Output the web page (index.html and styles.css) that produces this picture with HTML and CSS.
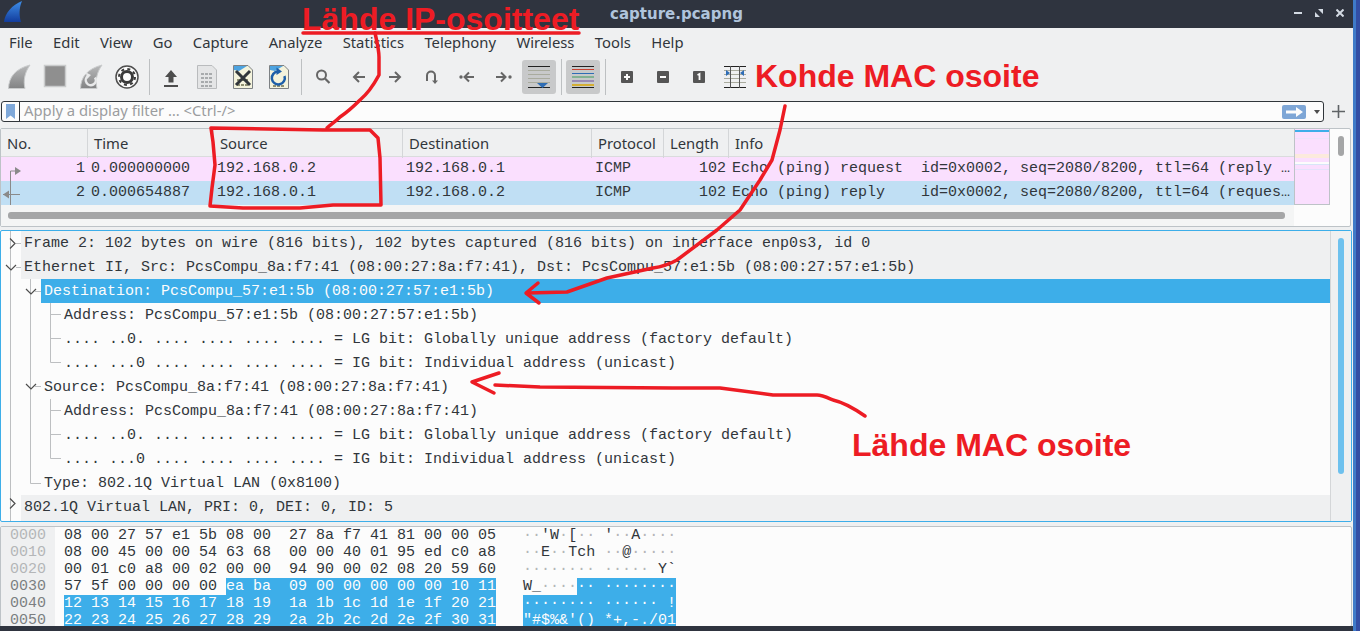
FILE: index.html
```html
<!DOCTYPE html>
<html lang="fi">
<head>
    <meta charset="UTF-8">
    <title>capture.pcapng</title>
    <link rel="stylesheet" href="styles.css">
</head>
<body>
<div class="window">
    <div class="titlebar">
        <svg class="app-logo" width="20" height="22" viewBox="0 0 20 22">
            <defs><linearGradient id="finBlue" x1="0" y1="0" x2="0" y2="1"><stop offset="0" stop-color="#3f8fe8"/><stop offset="1" stop-color="#123c9c"/></linearGradient></defs>
            <path d="M0 21C1 12 8 4 18 0C15 7 15 14 17 21Z" fill="url(#finBlue)"/>
        </svg>
        <div class="title">capture.pcapng</div>
        <div class="win-buttons">
            <svg width="8" height="8" viewBox="0 0 8 8"><rect y="3" width="8" height="2" fill="#d3dae3"/></svg>
            <svg width="8" height="8" viewBox="0 0 8 8"><path d="M0 8V3L5 8ZM8 0V5L3 0Z" fill="#d3dae3"/></svg>
            <svg width="8" height="8" viewBox="0 0 8 8"><path d="M0.5 0.5L7.5 7.5M7.5 0.5L0.5 7.5" stroke="#d3dae3" stroke-width="2"/></svg>
        </div>
    </div>

    <div class="menubar">
        <span>File</span><span>Edit</span><span>View</span><span>Go</span><span>Capture</span><span>Analyze</span><span>Statistics</span><span>Telephony</span><span>Wireless</span><span>Tools</span><span>Help</span>
    </div>

    <div class="toolbar">
        <svg width="0" height="0" class="defs"><defs><linearGradient id="finGrey" x1="0" y1="0" x2="0" y2="1"><stop offset="0" stop-color="#b8b9ba"/><stop offset="1" stop-color="#828384"/></linearGradient></defs></svg>
        <div class="tool"><svg viewBox="0 0 36 34"><path d="M7.500 28.500C8 17 14 9 29 5C24 12 22 20 24 28.500Z" fill="url(#finGrey)" stroke="#c9cbcc"/></svg></div>
        <div class="tool"><svg viewBox="0 0 36 34"><rect x="7.500" y="5.500" width="21" height="21" fill="#8f8f8f" stroke="#c9cbcc" stroke-width="1.500"/></svg></div>
        <div class="tool"><svg viewBox="0 0 36 34"><path d="M7.500 28.500C8 17 14 9 29 5C24 12 22 20 24 28.500Z" fill="url(#finGrey)" stroke="#c9cbcc"/><path d="M22 17.500A5 5 0 1 1 15 16" fill="none" stroke="#e8e9ea" stroke-width="2.500"/><path d="M13 12.500L18 15L14 19Z" fill="#e8e9ea"/></svg></div>
        <div class="tool"><svg viewBox="0 0 36 34"><circle cx="18" cy="17" r="11" fill="#fcfcfc" stroke="#4d4d4d" stroke-width="1.500"/><circle cx="18" cy="17" r="5.500" fill="none" stroke="#3a3a3a" stroke-width="3"/><circle cx="18" cy="17" r="8" fill="none" stroke="#3a3a3a" stroke-width="2" stroke-dasharray="3 3.300"/></svg></div>
        <div class="sep"></div>
        <div class="tool"><svg viewBox="0 0 36 34"><path d="M18 10L24 17H20.500V22.500H15.500V17H12Z" fill="#4d4d4d"/><rect x="11" y="25" width="14" height="2" fill="#4d4d4d"/></svg></div>
        <div class="tool"><svg viewBox="0 0 36 34"><path d="M8.500 5.500H23L27.500 10V28.500H8.500Z" fill="#e4e5e6" stroke="#b9bbbd"/><path d="M12 14H24M12 18H24M12 22H24M12 26H24" stroke="#a8abad" stroke-width="2" stroke-dasharray="3 1"/></svg></div>
        <div class="tool"><svg viewBox="0 0 36 34"><path d="M8.500 5.500H23L27.500 10V28.500H8.500Z" fill="#f4f3dc" stroke="#7d8184"/><path d="M9 6H22L14 11L9 10Z" fill="#4da3e0"/><path d="M12 20H24M12 25H24" stroke="#8e9072" stroke-width="2" stroke-dasharray="3 1"/><path d="M11 11L25 25M25 11L11 25" stroke="#31363b" stroke-width="3"/></svg></div>
        <div class="tool"><svg viewBox="0 0 36 34"><path d="M8.500 5.500H23L27.500 10V28.500H8.500Z" fill="#f4f3dc" stroke="#7d8184"/><path d="M9 6H22L14 11L9 10Z" fill="#4da3e0"/><path d="M12 26H24" stroke="#8e9072" stroke-width="2" stroke-dasharray="3 1"/><path d="M23.500 16A6.500 6.500 0 1 1 17 11.500" fill="none" stroke="#1d5fa8" stroke-width="2.500"/><path d="M15.500 7.500L21 11.500L15.500 15Z" fill="#1d5fa8"/></svg></div>
        <div class="sep"></div>
        <div class="tool"><svg viewBox="0 0 36 34"><circle cx="16.500" cy="15" r="4.500" fill="none" stroke="#666" stroke-width="2"/><path d="M20 18.500L24.500 23" stroke="#666" stroke-width="2.200"/></svg></div>
        <div class="tool"><svg viewBox="0 0 36 34"><path d="M24 17H13M18 12L13 17L18 22" fill="none" stroke="#666" stroke-width="2"/></svg></div>
        <div class="tool"><svg viewBox="0 0 36 34"><path d="M12 17H23M18 12L23 17L18 22" fill="none" stroke="#666" stroke-width="2"/></svg></div>
        <div class="tool"><svg viewBox="0 0 36 34"><path d="M14 21V15.500A4 4 0 0 1 22 15.500V22" fill="none" stroke="#666" stroke-width="2"/><path d="M19 20.500H25L22 24Z" fill="#666"/></svg></div>
        <div class="tool"><svg viewBox="0 0 36 34"><circle cx="12" cy="17" r="1.700" fill="#666"/><path d="M25 17H16M20 12.500L15.500 17L20 21.500" fill="none" stroke="#666" stroke-width="2"/></svg></div>
        <div class="tool"><svg viewBox="0 0 36 34"><circle cx="25" cy="17" r="1.700" fill="#666"/><path d="M11 17H20M16 12.500L20.500 17L16 21.500" fill="none" stroke="#666" stroke-width="2"/></svg></div>
        <div class="tool checked"><svg viewBox="0 0 36 34"><path d="M7 6.500H29M7 27.500H29" stroke="#222" stroke-width="1.200"/><path d="M7 10.500H29M7 14.500H29M7 18.500H29M7 22.500H29" stroke="#a9ab9e"/><path d="M16 23H27L21.500 28Z" fill="#2f6db5"/></svg></div>
        <div class="sep"></div>
        <div class="tool checked"><svg viewBox="0 0 36 34"><path d="M7 6.500H29M7 27.500H29" stroke="#222" stroke-width="1.200"/><path d="M7 9.500H29" stroke="#c8402f"/><path d="M7 13.500H29" stroke="#2f6db5"/><path d="M7 17H29" stroke="#3f9a5c"/><path d="M7 21H29" stroke="#6a4a9c"/><path d="M7 25H29" stroke="#d9a400" stroke-width="1.500"/></svg></div>
        <div class="sep"></div>
        <div class="tool"><svg viewBox="0 0 36 34"><rect x="12" y="11" width="12" height="12" rx="1" fill="#555"/><path d="M15 17H21M18 14V20" stroke="#fcfcfc" stroke-width="2"/></svg></div>
        <div class="tool"><svg viewBox="0 0 36 34"><rect x="12" y="11" width="12" height="12" rx="1" fill="#555"/><path d="M15 17H21" stroke="#fcfcfc" stroke-width="2"/></svg></div>
        <div class="tool"><svg viewBox="0 0 36 34"><rect x="12" y="11" width="12" height="12" rx="1" fill="#555"/><path d="M16.500 15L18.500 14V20" fill="none" stroke="#fcfcfc" stroke-width="1.800"/></svg></div>
        <div class="tool"><svg viewBox="0 0 36 34"><path d="M7 6.500H29M7 27.500H29" stroke="#222"/><path d="M7 10.500H29M7 14.500H29M7 18.500H29M7 22.500H29" stroke="#a9ab9e"/><path d="M13.500 6V28M22.500 6V28" stroke="#555"/><path d="M9 10L13 13L9 16ZM27 10L23 13L27 16Z" fill="#2f6db5"/></svg></div>
    </div>

    <div class="filterbar">
        <div class="filter-box">
            <div class="filter-mark"><svg width="9" height="15" viewBox="0 0 9 15"><path d="M0 0H9V15L4.500 11.500L0 15Z" fill="#7fa8d9"/></svg></div>
            <div class="filter-text">Apply a display filter … &lt;Ctrl-/&gt;</div>
            <div class="filter-apply"><svg width="18" height="10" viewBox="0 0 18 10"><path d="M1 3.500H11V0L18 5L11 10V6.500H1Z" fill="#fcfcfc"/></svg></div>
            <div class="filter-drop"></div>
        </div>
        <svg class="filter-plus" width="13" height="13" viewBox="0 0 13 13"><path d="M6.500 0V13M0 6.500H13" stroke="#5f6366" stroke-width="1.600"/></svg>
    </div>

    <div class="packets panel">
        <div class="packet-list">
            <div class="cols packet-head">
                <div>No.</div><div>Time</div><div>Source</div><div>Destination</div><div>Protocol</div><div>Length</div><div>Info</div>
            </div>
            <div class="cols packet-row pink">
                <div class="num">1</div><div>0.000000000</div><div>192.168.0.2</div><div>192.168.0.1</div><div>ICMP</div><div class="num">102</div><div>Echo (ping) request  id=0x0002, seq=2080/8200, ttl=64 (reply …</div>
            </div>
            <div class="cols packet-row blue">
                <div class="num">2</div><div>0.000654887</div><div>192.168.0.1</div><div>192.168.0.2</div><div>ICMP</div><div class="num">102</div><div>Echo (ping) reply    id=0x0002, seq=2080/8200, ttl=64 (reques…</div>
            </div>
            <div class="hscroll"><div class="hscroll-thumb"></div></div>
            <svg class="related" width="22" height="50" viewBox="0 0 22 50">
                <path d="M9.500 14V48M9.500 14H15M2 37.500H19" fill="none" stroke="#8a8a8a"/>
                <path d="M14 10L20 14L14 18ZM8 33.500L2 37.500L8 41.500Z" fill="#8a8a8a"/>
            </svg>
        </div>
        <div class="minimap"></div>
        <div class="vscroll"><div class="vscroll-thumb"></div></div>
    </div>

    <div class="details panel">
        <div class="tree">
            <div class="tree-row top">Frame 2: 102 bytes on wire (816 bits), 102 bytes captured (816 bits) on interface enp0s3, id 0</div>
            <div class="tree-row top">Ethernet II, Src: PcsCompu_8a:f7:41 (08:00:27:8a:f7:41), Dst: PcsCompu_57:e1:5b (08:00:27:57:e1:5b)</div>
            <div class="tree-row lvl1 selected">Destination: PcsCompu_57:e1:5b (08:00:27:57:e1:5b)</div>
            <div class="tree-row lvl2">Address: PcsCompu_57:e1:5b (08:00:27:57:e1:5b)</div>
            <div class="tree-row lvl2">.... ..0. .... .... .... .... = LG bit: Globally unique address (factory default)</div>
            <div class="tree-row lvl2">.... ...0 .... .... .... .... = IG bit: Individual address (unicast)</div>
            <div class="tree-row lvl1">Source: PcsCompu_8a:f7:41 (08:00:27:8a:f7:41)</div>
            <div class="tree-row lvl2">Address: PcsCompu_8a:f7:41 (08:00:27:8a:f7:41)</div>
            <div class="tree-row lvl2">.... ..0. .... .... .... .... = LG bit: Globally unique address (factory default)</div>
            <div class="tree-row lvl2">.... ...0 .... .... .... .... = IG bit: Individual address (unicast)</div>
            <div class="tree-row lvl1">Type: 802.1Q Virtual LAN (0x8100)</div>
            <div class="tree-row top last">802.1Q Virtual LAN, PRI: 0, DEI: 0, ID: 5</div>
            <svg class="guides" width="62" height="290" viewBox="0 0 62 290">
                <g fill="none" stroke="#bdbfc1">
                    <path d="M9.500 0V290M15 12.500H20M15 36.500H20"/>
                    <path d="M29.500 48V252.500H40M34 60.500H40M34 155.500H40"/>
                    <path d="M49.500 72V131.500H60M49.500 83.500H60M49.500 107.500H60"/>
                    <path d="M49.500 168V227.500H60M49.500 179.500H60M49.500 203.500H60"/>
                </g>
                <g fill="none" stroke="#4d4d4d" stroke-width="1.200">
                    <path d="M9 7.500L14 12.500L9 17.500M9 267.500L14 272.500L9 277.500"/>
                    <path d="M5 34L10 39L15 34M25 58L30 63L35 58M25 153L30 158L35 153"/>
                </g>
            </svg>
        </div>
        <div class="vscroll side"><div class="details-thumb"></div></div>
    </div>

    <div class="hex panel">
        <div class="hex-row"><span class="hex-off dim">0000</span><span>08 00 27 57 e1 5b 08 00  27 8a f7 41 81 00 00 05</span><span class="ascii"><i>··</i>'W<i>·</i>[<i>··</i> '<i>··</i>A<i>····</i></span></div>
        <div class="hex-row"><span class="hex-off dim">0010</span><span>08 00 45 00 00 54 63 68  00 00 40 01 95 ed c0 a8</span><span class="ascii"><i>··</i>E<i>··</i>Tch <i>··</i>@<i>·····</i></span></div>
        <div class="hex-row"><span class="hex-off dim">0020</span><span>00 01 c0 a8 00 02 00 00  94 90 00 02 08 20 59 60</span><span class="ascii"><i>········ ·····</i> Y`</span></div>
        <div class="hex-row"><span class="hex-off">0030</span><span>57 5f 00 00 00 00 <b>ea ba  09 00 00 00 00 00 10 11</b></span><span class="ascii">W_<i>····</i><b>·· ········</b></span></div>
        <div class="hex-row"><span class="hex-off">0040</span><span><b>12 13 14 15 16 17 18 19  1a 1b 1c 1d 1e 1f 20 21</b></span><span class="ascii"><b>········ ······ !</b></span></div>
        <div class="hex-row"><span class="hex-off">0050</span><span><b>22 23 24 25 26 27 28 29  2a 2b 2c 2d 2e 2f 30 31</b></span><span class="ascii"><b>"#$%&amp;'() *+,-./01</b></span></div>
    </div>
</div>
<div class="screen-edge"></div>
<div class="bottom-bar"></div>

<!-- merkinnät kuvakaappauksen päällä -->
<svg class="marks" width="1360" height="631" viewBox="0 0 1360 631">
    <g fill="none" stroke="#ed1c24" stroke-width="3.500" stroke-linejoin="round" stroke-linecap="round">
        <path d="M303 33H579"/>
        <path d="M375 33C377 42 379 50 379 57V75C372 88 366 95 360 100C352 108 346 113 340 117C335 122 330 125 327 128"/>
        <path d="M211 128L323 130H370L378 138L380 158L381 205H333L300 208H243L210 206L212 188L215 165L213 142Z"/>
        <path d="M785 106L780 130L772 160L760 180L740 210L717 230L677 260C668 265 660 267 653 268L607 278L567 292L527 293"/>
        <path d="M538 283L526 293L539 303"/>
        <path d="M865 416C852 407 842 402 833 400C826 397 822 395 817 395L773 395L720 388H673L540 387L495 385"/>
        <path d="M499 373L472 382L494 393"/>
    </g>
</svg>
<div class="mark mark-ip">Lähde IP-osoitteet</div>
<div class="mark mark-dst">Kohde MAC osoite</div>
<div class="mark mark-src">Lähde MAC osoite</div>
</body>
</html>
```

FILE: styles.css
```css
html, body {
    margin: 0;
    height: 631px;
    overflow: hidden;
}
body {
    position: relative;
    background: #2f343f;
    font-family: "Noto Sans", sans-serif;
    font-size: 14.800px;
    color: #31363b;
}
.window {
    width: 1353px;
    height: 626px;
    background: #eff0f1;
    overflow: hidden;
}

/* otsikkopalkki */
.titlebar {
    position: relative;
    display: flex;
    align-items: center;
    height: 28px;
    background: #2f343f;
}
.app-logo {
    margin: 0 0 4px 4px;
}
.title {
    position: absolute;
    left: 0;
    right: 0;
    text-align: center;
    font-family: "DejaVu Sans", sans-serif;
    font-weight: bold;
    font-size: 15px;
    color: #afc4dc;
}
.win-buttons {
    position: absolute;
    right: 9px;
    top: 9px;
    display: flex;
    gap: 13px;
}

/* valikko */
.menubar {
    display: flex;
    align-items: center;
    gap: 20.400px;
    box-sizing: border-box;
    height: 30px;
    padding: 0 0 2px 9px;
}

/* työkalupalkki */
.toolbar {
    display: flex;
    height: 38px;
    padding: 2px 0 0 1px;
}
.defs {
    position: absolute;
}
.tool {
    width: 34px;
    height: 34px;
    margin: 0 1px;
    border-radius: 3px;
}
.tool svg {
    display: block;
    width: 36px;
    height: 34px;
    margin-left: -1px;
}
.tool.checked {
    background: #c8c9ca;
}
.sep {
    width: 1px;
    height: 36px;
    margin: -1px 3px 0 4px;
    background: #bdc0c2;
}

/* suodatin */
.filterbar {
    display: flex;
    align-items: center;
    height: 30px;
    padding-bottom: 3px;
    box-sizing: border-box;
    padding-left: 1px;
}
.filter-box {
    display: flex;
    align-items: center;
    box-sizing: border-box;
    width: 1323px;
    height: 21px;
    background: #fcfcfc;
    border: 1px solid #31363b;
    border-radius: 3px;
}
.filter-mark {
    display: flex;
    align-items: center;
    justify-content: center;
    width: 17px;
    height: 19px;
    border-right: 1px solid #31363b;
}
.filter-text {
    flex: 1;
    padding: 0 0 2px 4px;
    line-height: 17px;
    color: #9b9d9f;
}
.filter-apply {
    display: flex;
    align-items: center;
    justify-content: center;
    width: 24px;
    height: 14px;
    background: #7ea6d6;
    border-radius: 2px;
}
.filter-drop {
    width: 0;
    height: 0;
    margin: 0 3px 0 8px;
    border-left: 3.500px solid transparent;
    border-right: 3.500px solid transparent;
    border-top: 4px solid #4d4d4d;
}
.filter-plus {
    margin-left: 8px;
}

/* paneelit */
.panel {
    box-sizing: border-box;
    width: 1352px;
    background: #fcfcfc;
    border: 1px solid #bdc3c7;
    border-radius: 2px;
    font-family: "Liberation Mono", monospace;
    font-size: 15px;
}
.packets {
    display: flex;
    width: 1351px;
    height: 99px;
    margin-bottom: 3px;
}
.packet-list {
    position: relative;
    width: 1293px;
}
.cols {
    display: grid;
    grid-template-columns: 86px 126px 189px 189px 72px 65px 1fr;
}
.packet-head {
    height: 28px;
    line-height: 29px;
    box-sizing: border-box;
    border-bottom: 1px solid #dadcdd;
    background: #eff0f1;
    font-family: "Noto Sans", sans-serif;
    font-size: 14.800px;
}
.packet-head div {
    padding-left: 6px;
    border-left: 1px solid #d4d6d8;
}
.packet-head div:first-child {
    border-left: none;
}
.packet-row {
    height: 24px;
    line-height: 23px;
    white-space: pre;
}
.packet-row div {
    padding-left: 4px;
    overflow: hidden;
}
.packet-row .num {
    padding: 0 2px 0 0;
    text-align: right;
}
.pink {
    background: #fadffe;
}
.blue {
    background: #c0dff4;
}
.hscroll {
    height: 21px;
    padding: 7px 9px 0 7px;
    box-sizing: border-box;
    background: #f4f5f5;
}
.hscroll-thumb {
    height: 7px;
    background: #a5a6a7;
    border-radius: 3px;
}
.related {
    position: absolute;
    left: 0;
    top: 28px;
}
.minimap {
    box-sizing: border-box;
    width: 36px;
    height: 76px;
    border: 1px solid #bdc3c7;
    border-width: 0 1px 1px 1px;
    background: linear-gradient(#fadffe 0 1px, #3daee9 1px 3px, #fadffe 3px 9px, #ece4fb 9px 10px, #fadffe 10px 25px, #fbeadd 25px 29px, #fadffe 29px 33px, #fcfcfc 33px 35px, #d8e6f8 35px 36px, #fadffe 36px 40px, #e4e2fa 40px 41px, #fadffe 41px);
}
.vscroll {
    flex: 1;
    padding: 7px 0 0 8px;
}
.vscroll-thumb {
    width: 6px;
    height: 20px;
    background: #a5a6a7;
    border-radius: 3px;
}

/* pakettipuu */
.details {
    display: flex;
    height: 292px;
    margin-bottom: 4px;
    border-color: #3daee9;
}
.tree {
    position: relative;
    flex: 1;
}
.tree-row {
    height: 24px;
    line-height: 25px;
    padding-left: 3px;
    margin-left: 20px;
    white-space: pre;
}
.tree-row.top {
    background: #eff0f1;
}
.tree-row.last {
    height: 26px;
}
.tree-row.lvl1 {
    margin-left: 40px;
}
.tree-row.lvl2 {
    margin-left: 60px;
}
.tree-row.selected {
    background: #3daee9;
    color: #fcfcfc;
}
.guides {
    position: absolute;
    left: 0;
    top: 0;
}
.vscroll.side {
    flex: none;
    box-sizing: border-box;
    width: 21px;
    background: #eff0f1;
    border-left: 1px solid #d4d6d8;
    padding-left: 7px;
}
.details-thumb {
    width: 6px;
    height: 236px;
    background: #6ec1ee;
    border-radius: 3px;
}

/* heksanäkymä */
.hex {
    height: 101px;
    overflow: hidden;
}
.hex-row {
    display: flex;
    height: 17px;
    line-height: 17px;
    white-space: pre;
}
.hex-off {
    box-sizing: border-box;
    width: 54px;
    margin-right: 9px;
    padding-left: 9px;
    background: #eff0f1;
    color: #7c7f82;
}
.hex-off.dim {
    color: #b4b6b8;
}
.ascii {
    margin-left: 27px;
}
.hex i {
    font-style: normal;
    color: #b4b6b8;
}
.hex b {
    font-weight: normal;
    background: #3daee9;
    color: #fcfcfc;
}

/* reunat */
.screen-edge {
    position: absolute;
    left: 1353px;
    top: 0;
    width: 7px;
    height: 631px;
    background: linear-gradient(90deg, #3f7bc8 0 3px, #334ea4 3px);
}
.bottom-bar {
    height: 5px;
    background: #2f343f;
}

/* punaiset merkinnät */
.marks {
    position: absolute;
    left: 0;
    top: 0;
}
.mark {
    position: absolute;
    font-family: "Liberation Sans", sans-serif;
    font-weight: bold;
    font-size: 32px;
    line-height: 30px;
    color: #ed1c24;
    white-space: nowrap;
}
.mark-ip {
    left: 302px;
    top: 4px;
}
.mark-dst {
    left: 755px;
    top: 61px;
}
.mark-src {
    left: 852px;
    top: 430px;
}
```
